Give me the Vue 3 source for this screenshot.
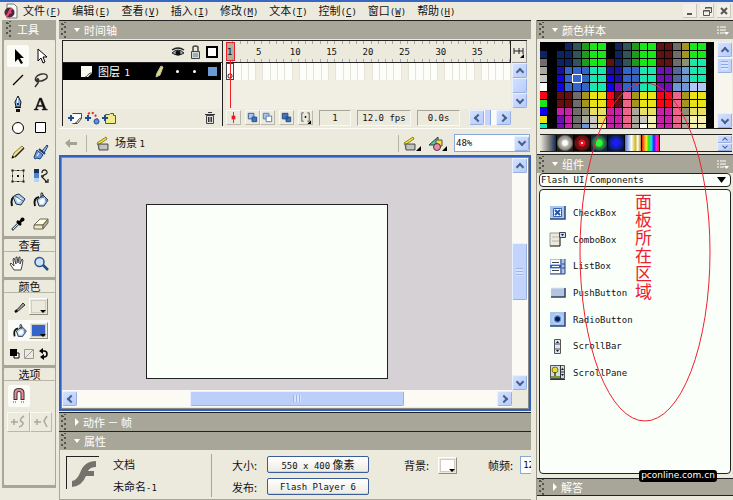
<script setup>
import { ref } from 'vue'

const menus = [
  ['文件', 'F'], ['编辑', 'E'], ['查看', 'V'], ['插入', 'I'], ['修改', 'M'],
  ['文本', 'T'], ['控制', 'C'], ['窗口', 'W'], ['帮助', 'H'],
]

const tools = [
  { name: '箭头', art: '<path d="M8 4v13l3-3 3 5 2-1-3-5h4z" fill="#000"/>' },
  { name: '部分选取', art: '<path d="M8 4v12l3-3 2 5 2-1-2-5h4z" fill="#fff" stroke="#000"/>' },
  { name: '线条', art: '<path d="M6 16L16 6" stroke="#000" stroke-width="1.2"/>' },
  { name: '套索', art: '<path d="M9 13C2 12 6 6 12 5c6-1 7 4 2 6-4 2-8 1-7-1 1-1 3 1 1 4l-3 4" fill="none" stroke="#333" stroke-width="1.4"/>' },
  { name: '钢笔', art: '<path d="M11 3L8 9l1 5h4l1-5z" fill="#8db3e8" stroke="#111"/><path d="M10.500 5v5" stroke="#fff"/><circle cx="11" cy="11" r="1" fill="#111"/><path d="M8 14h6v1H8zM9 16h4v3H9z" fill="#111"/>' },
  { name: '文本', art: '<path d="M9.500 5h2l4.500 11 1.500.5V17h-5.500v-.7l1.500-.3-.9-2.500H7.500L6.700 16l1.500.3v.7H4v-.7l1.300-.3zM8 12.300h4.200L10.200 7z" fill="#111" stroke="#111" stroke-width=".4"/>' },
  { name: '椭圆', art: '<circle cx="11" cy="11" r="5.500" fill="#fff" stroke="#000"/>' },
  { name: '矩形', art: '<path d="M5.500 5.500h10v10h-10z" fill="#fff" stroke="#000"/>' },
  { name: '铅笔', art: '<path d="M5 17l2-5 8-7 2 2-8 8z" fill="#f0e48c" stroke="#8a7c38"/><path d="M8 16l9-9" stroke="#222" stroke-width="1.400"/><path d="M4.500 17.500l1-3 2 2z" fill="#000"/>' },
  { name: '刷子', art: '<path d="M17 4l-5 6 2 2 4-7z" fill="#9cc0f0" stroke="#1c3b70"/><path d="M7 9l6 5-3 4-3-1-2 1-1-2z" fill="#6d9be0" stroke="#1c3b70"/><path d="M9 8l6 5" stroke="#1c3b70" stroke-width="2"/><path d="M7 15l2-3" stroke="#fff"/>' },
  { name: '任意变形', art: '<path d="M5.500 5.500h11v11h-11z" fill="none" stroke="#222" stroke-dasharray="1 1"/><path d="M5 5h1v1H5zM4.500 4.500h2v2h-2zM10 5h2v1h-2zM15.500 4.500h2v2h-2zM5 10h1v2H5zM16 10h1v2h-1zM4.500 15.500h2v2h-2zM10 16h2v1h-2zM15.500 15.500h2v2h-2zM10 10h2v2h-2z" fill="#111"/>' },
  { name: '填充变形', art: '<path d="M4 4h5v4H4z" fill="#17325e"/><path d="M4 8h5v5H4z" fill="#4d84cf"/><path d="M4 13h5v4H4z" fill="#b4d2f4"/><path d="M12 8c0-5 6-3 5 0-1 2-5 2-5 4l5 5M11 11h3M15 17h3v-3" fill="none" stroke="#222" stroke-width="1.300"/>' },
  { name: '墨水瓶', art: '<path d="M5 17q-2-9 4-10" fill="none" stroke="#111" stroke-width="2"/><path d="M6 8q3-3 6-3l6 5-4 6-5-1z" fill="#a9cdef" stroke="#223048"/><path d="M9 9l5 0 1 2-4 3z" fill="#fff"/><path d="M8 7l8 5" stroke="#40669c"/>' },
  { name: '颜料桶', art: '<path d="M5 17q-2-8 4-9" fill="none" stroke="#111" stroke-width="2"/><path d="M7 11l6-5 5 5-4 6H9z" fill="#b9d4ee" stroke="#223048"/><path d="M9 12l4-3 2 3-2 3h-3z" fill="#fff"/><path d="M11 9V4q2-1 2 2v3" fill="none" stroke="#223048"/><path d="M15 9l3 3-2 3z" fill="#5580bc"/>' },
  { name: '滴管', art: '<path d="M5 17l7-7" stroke="#456" stroke-width="2.500"/><path d="M6 16l6-6" stroke="#dfe9f4"/><path d="M10 8l4 4M12 10l4-4" stroke="#000" stroke-width="2.500"/><circle cx="15.500" cy="6.500" r="2" fill="#000"/>' },
  { name: '橡皮擦', art: '<path d="M4 12l6-6h8l-5 6z" fill="#fffde0" stroke="#666"/><path d="M4 12h9v4H4z" fill="#f1e9ad" stroke="#666"/><path d="M13 12l5-6v4l-5 6z" fill="#b5ab7c" stroke="#666"/>' },
]

const bucket = tools[13].art
const handArt = '<path d="M7 17l-4-6 1-1 3 3-1-7 1-1 2 6V4h1l1 6 1-6h1v7l2-5 1 1-1 6-1 4z" fill="#fff" stroke="#333" stroke-width=".9"/>'
const lensArt = '<circle cx="9.500" cy="9" r="4.500" fill="#cfe2f8" stroke="#2c5394" stroke-width="1.500"/><path d="M13 12l5 5" stroke="#234a86" stroke-width="2.500"/>'

const clapper = '<path d="M2 8l9-6 1 2-9 6z" fill="#f0e440" stroke="#8a8424"/><path d="M3 9h10v6H4z" fill="#a4a7a4" stroke="#555"/><path d="M5 11h7M5 13h7" stroke="#dfe2df"/>'

const frames = Array.from({ length: 39 }, (_, i) => i + 1)

const palette = {
  k: '#000', n: '#0c2464', s: '#305458', g: '#1c9c18', l: '#18e818', m: '#641010',
  r: '#f80414', y: '#e8e418', o: '#a49420', a: '#706c6c', b: '#aaa89c', c: '#cac8c4',
  w: '#fbfff8', d: '#1c10a0', u: '#1000ec', e: '#3464c8', t: '#18e8b0', p: '#7010b4',
  i: '#6c98d4', q: '#b0c8f8', z: '#ea648c', x: '#c820a8', v: '#e8e064', f: '#f4f0b0', h: '#8c9070', j: '#50689c',
}
const swatches = [
  'kkknsgllknsgllmmaollk',
  'nknnsgllknsgllmmaollk',
  'aknnsgllmnsgllmmahttk',
  'bkdeeettddeettppjittk',
  'ckueeettudeettppjittk',
  'wkueeettupeettppiiqqk',
  'rkmmaoyyrmzoyyrrzoyyk',
  'lkmmaoyyrmzoyyrrzoyyk',
  'ukxxahvvxxzbvvxxzhvvk',
  'ykpxabcvxxzbcfxxzbffk',
  'tkpxaicfxxzbwfxxzbffk',
].join('').split('')

const components = [
  { name: 'CheckBox', art: '<path d="M1 2h15v13H1z" fill="#a9c4ee"/><path d="M1 15h15V2" fill="none" stroke="#2d4478" stroke-width="1.500"/><path d="M4.500 4.500h8v8h-8z" fill="#fff" stroke="#3465b4"/><path d="M6 6l5 5M11 6l-5 5" stroke="#2454a8" stroke-width="2"/>' },
  { name: 'ComboBox', art: '<path d="M1 2h10v13H1z" fill="#eceadf" stroke="#9a988c"/><path d="M3 6h8M3 10h8" stroke="#b5b3a8"/><path d="M10.500 1.500h6v5h-6z" fill="#c9dbf7" stroke="#445"/><path d="M12 3h3l-1.500 2z" fill="#111"/><path d="M11 7v8H1" fill="none" stroke="#333"/>' },
  { name: 'ListBox', art: '<path d="M1 1h15v15H1z" fill="#a9c4ee"/><path d="M2 2h9v4H2zM2 11h9v4H2z" fill="#fff"/><path d="M3 4.500h7M3 12.500h7" stroke="#444"/><path d="M1 7h11v3H1z" fill="#2f66c0"/><path d="M3 8.500h7" stroke="#fff"/><path d="M12 1v15M13 6h3M13 10h3M1 16h15V1" fill="none" stroke="#2d4478"/>' },
  { name: 'PushButton', art: '<rect x="2" y="4" width="14" height="9" rx="1" fill="#b3c4e2"/><path d="M2 4h14" stroke="#dce7f8"/><path d="M2 13h14V4" fill="none" stroke="#34405c" stroke-width="1.500"/>' },
  { name: 'RadioButton', art: '<path d="M1 1h15v14H1z" fill="#a9c4ee"/><path d="M1 15h15V1" fill="none" stroke="#2d4478" stroke-width="1.500"/><circle cx="8.500" cy="8" r="4.500" fill="#5d92de" stroke="#dfe9fa"/><circle cx="8.500" cy="8" r="2.500" fill="#0a1c48"/>' },
  { name: 'ScrollBar', art: '<path d="M5.500 1.500h6v14h-6z" fill="#dbe6f8" stroke="#555"/><path d="M6 6h6M6 11h6" stroke="#555"/><path d="M7 5h3L8.500 3zM7 12h3l-1.500 2z" fill="#111"/>' },
  { name: 'ScrollPane', art: '<path d="M1.500 1.500h14v13h-14z" fill="#cddcf4" stroke="#555"/><circle cx="6" cy="6" r="3" fill="#e6dc30" stroke="#7b7a18"/><path d="M6 8v5" stroke="#36501c" stroke-width="1.500"/><path d="M2 12h9v2H2z" fill="#7c9c30"/><path d="M11.500 1v14M12 8h4M1 15.500h15" stroke="#333"/><path d="M12 6h3l-1.500-2zM12 10h3l-1.500 2z" fill="#111"/>' },
]

const zoom = ref('48%')
const library = ref('Flash UI Components')
const rate = ref('12')
</script>

<template>
  <div class="app">
    <header class="menubar">
      <svg class="logo" viewBox="0 0 14 16" aria-hidden="true">
        <path d="M3 1h7l3 3v11H3z" fill="#f8f8f4" stroke="#777" />
        <circle cx="5.500" cy="9.500" r="5" fill="#4c2444" />
        <path d="M8 5.500c-3 1-3 7-6 8M4 9.500h3.500" stroke="#f04868" fill="none" stroke-width="2" />
      </svg>
      <nav class="menus">
        <button v-for="[label, key] in menus" :key="key" class="menu">{{ label }}<span class="lat">(<u>{{ key }}</u>)</span></button>
      </nav>
      <div class="winbtns">
        <button aria-label="最小化"><svg viewBox="0 0 12 12"><path d="M3 9h5" stroke="#555" stroke-width="2" /></svg></button>
        <button aria-label="还原"><svg viewBox="0 0 12 12"><path d="M4.500 4V2.500h6v5H9M4 3h7M2.500 5.500h6v5h-6zM2 6h7" fill="none" stroke="#555" /></svg></button>
        <button aria-label="关闭"><svg viewBox="0 0 12 12"><path d="M3 3l6 6M9 3l-6 6" stroke="#555" stroke-width="2" /></svg></button>
      </div>
    </header>

    <div class="body">
      <aside class="tools">
        <h2 class="tools-title"><i class="grip"></i>工具</h2>
        <div class="tool-box tool-grid">
          <button v-for="(t, i) in tools" :key="t.name" class="tool" :class="{ on: i === 0 }" :aria-label="t.name">
            <svg viewBox="0 0 22 22" v-html="t.art"></svg>
          </button>
        </div>
        <section class="tool-box">
          <h3>查看</h3>
          <div class="view-row">
            <button class="tool" aria-label="手形"><svg viewBox="0 0 22 22" v-html="handArt"></svg></button>
            <button class="tool" aria-label="缩放"><svg viewBox="0 0 22 22" v-html="lensArt"></svg></button>
          </div>
        </section>
        <section class="tool-box colors">
          <h3>颜色</h3>
          <div class="color-row">
            <svg viewBox="0 0 18 18"><path d="M4 14l8-9 2 2-8 7z" fill="#9aa49c" stroke="#333" /><path d="M4 14l2-2" stroke="#000" stroke-width="2" /></svg>
            <button class="well" aria-label="笔触颜色"><i class="chip"></i></button>
          </div>
          <div class="color-row on">
            <svg viewBox="1 1 20 20" v-html="bucket"></svg>
            <button class="well" aria-label="填充颜色"><i class="chip fill"></i></button>
          </div>
          <div class="mini-row">
            <button aria-label="黑白"><svg viewBox="0 0 12 12"><path d="M5 5h5v5H5z" fill="#fff" stroke="#000" /><path d="M1 1h7v7H1z" /></svg></button>
            <button aria-label="没有颜色"><svg viewBox="0 0 12 12"><path d="M1.500 1.500h9v9h-9zM2 10l8-8" fill="none" stroke="#999" /></svg></button>
            <button aria-label="交换颜色"><svg viewBox="0 0 12 12"><path d="M3 3h3q3 0 3 3t-3 3H4" fill="none" stroke="#000" stroke-width="1.500" /><path d="M1 3l4-3v6zM2 9l4-3v6z" /></svg></button>
          </div>
        </section>
        <section class="tool-box options">
          <h3>选项</h3>
          <button class="tool on" aria-label="对齐对象"><svg viewBox="0 0 22 22"><path d="M7.500 15V8q0-3 3.500-3t3.500 3v7" fill="none" stroke="#333" stroke-width="4" /><path d="M7.500 14V8q0-3 3.500-3t3.500 3v6" fill="none" stroke="#e88c94" stroke-width="2" /><path d="M5 17h4M13 17h4" stroke="#8aa4cc" stroke-width="2" stroke-dasharray="1 1" /></svg></button>
          <div class="pair">
            <button aria-label="平滑"><svg viewBox="0 0 20 18"><path d="M3 9h7M6 6v6M16 3c-5 3-4 5-2 6s1 4-3 5" fill="none" stroke="#aaa89c" stroke-width="1.500" /></svg></button>
            <button aria-label="伸直"><svg viewBox="0 0 20 18"><path d="M3 9h7M6 6v6M16 3l-3 5 3 6" fill="none" stroke="#aaa89c" stroke-width="1.500" /></svg></button>
          </div>
        </section>
      </aside>

      <main class="center">
        <h2 class="bar"><i class="grip"></i><i class="tri down"></i>时间轴</h2>
        <section class="timeline">
          <div class="layers">
            <div class="layer-head">
              <svg viewBox="0 0 16 14"><path d="M2 8q6-6 12 0-6 4-12 0z" fill="#9bb" stroke="#222" /><circle cx="8" cy="8" r="2.500" fill="#111" /><path d="M2 5q6-4 12 0" fill="none" stroke="#222" stroke-width="1.500" /></svg>
              <svg viewBox="0 0 16 14"><path d="M6 7V2.500q0-1.500 2.500-1.500T11 2.500V7" fill="none" stroke="#444" stroke-width="1.500" /><path d="M4.500 6.500h8v7h-8z" fill="#d9d8cc" stroke="#444" /><path d="M6 9h5M6 11h5" stroke="#5a80c0" /></svg>
              <svg viewBox="0 0 16 14"><path d="M3 2h10v10H3z" fill="#fff" stroke="#000" stroke-width="2" /></svg>
            </div>
            <div class="layer">
              <svg class="page" viewBox="0 0 13 13"><path d="M1 1h11v7l-4 4H1z" fill="#fafaf0" /><path d="M5 12c3 0 2-4 7-4" fill="#bbb" stroke="#444" /></svg>
              <span class="layer-name">图层 <span class="lat">1</span></span>
              <svg class="page" viewBox="0 0 13 13"><path d="M3 12l1-4 4-7 2 1-3 8z" fill="#e4dc68" stroke="#bbb" /></svg>
              <i class="dot"></i><i class="dot"></i><i class="outline"></i>
            </div>
            <div class="layer-foot">
              <svg viewBox="0 0 16 14"><path d="M5.500 2.500h9v5l-4 5h-5" fill="#fff" stroke="#444" /><path d="M8 12c3 0 2-4 6-5" fill="#bbb" stroke="#444" /><path d="M1 7h6M4 4v6" stroke="#1c4c98" stroke-width="2" /></svg>
              <svg viewBox="0 0 16 14"><path d="M4 3q6-4 9 5" fill="none" stroke="#f02020" stroke-width="2" stroke-dasharray="2 2" /><path d="M1 7h6M4 4v6" stroke="#1c4c98" stroke-width="2" /><circle cx="12.500" cy="10.500" r="2.500" fill="#5c90e0" stroke="#1c4c98" /></svg>
              <svg viewBox="0 0 16 14"><path d="M4.500 3.500h4l1-1h3v2h2v8h-10z" fill="#f0ec8c" stroke="#555" /><path d="M1 7h6M4 4v6" stroke="#1c4c98" stroke-width="2" /></svg>
              <svg class="trash" viewBox="0 0 16 14"><path d="M4.500 4.500h7v8h-7z" fill="#ddd" stroke="#444" /><path d="M3 3.500h10M6 1.500h4M6.500 6v5M8 6v5M9.500 6v5" stroke="#333" /></svg>
            </div>
          </div>
          <div class="frames">
            <div class="ruler">
              <span v-for="f in frames" :key="f" class="tick lat"><b v-if="f === 1 || f % 5 === 0">{{ f }}</b></span>
            </div>
            <div class="strip">
              <span v-for="f in frames" :key="f" class="cell" :class="{ key: f === 1, fifth: f % 5 === 0 }"></span>
            </div>
            <i class="playhead"></i>
            <div class="status lat">
              <button class="sb" aria-label="滚动到播放头"><svg viewBox="0 0 14 14"><path d="M7 1v12" stroke="#f01820" /><path d="M5 5h4v4H5z" fill="#f01820" /></svg></button>
              <button class="sb gap" aria-label="绘图纸外观"><svg viewBox="0 0 14 14"><path d="M2.500 2.500h6v6h-6z" fill="#a9c6f0" stroke="#335a98" /><path d="M6.500 6.500h5v5h-5z" fill="#4074c0" stroke="#244880" /></svg></button>
              <button class="sb" aria-label="绘图纸外观轮廓"><svg viewBox="0 0 14 14"><path d="M2.500 2.500h6v6h-6z" fill="#a9c6f0" stroke="#5578a8" /><path d="M5.500 5.500h6v6h-6z" fill="#fff" stroke="#5578a8" /></svg></button>
              <button class="sb gap" aria-label="编辑多个帧"><svg viewBox="0 0 14 14"><path d="M2.500 2.500h6v6h-6zM6.500 6.500h5v5h-5z" fill="#4074c0" stroke="#244880" /></svg></button>
              <button class="sb gap" aria-label="修改绘图纸标记"><svg viewBox="0 0 14 14"><path d="M5 2H3v9h2M9 2h2v9H9" fill="none" stroke="#555" /><circle cx="7" cy="6.500" r="1" /><path d="M13 10v4H9z" /></svg></button>
              <span class="field f1">1</span><span class="field f2">12.0 fps</span><span class="field f3">0.0s</span>
              <span class="hmini"><button class="xp" aria-label="向左"><i class="chev lt"></i></button><i class="nub"></i><button class="xp" aria-label="向右"><i class="chev rt"></i></button></span>
            </div>
          </div>
          <div class="tl-scroll">
            <button class="center-frame" aria-label="帧视图"><svg viewBox="0 0 14 14"><path d="M2 3v6M7 3v6M11 3v6M2 6h9" stroke="#222" /><path d="M12 9v4H8z" /></svg></button>
            <button class="xp" aria-label="向上"><i class="chev up"></i></button><i class="xp"></i><button class="xp" aria-label="向下"><i class="chev dn"></i></button>
          </div>
        </section>

        <section class="editbar">
          <svg class="back" viewBox="0 0 14 12"><path d="M1 6l5-4v3h7v3H6v3z" fill="#a4a296" /></svg>
          <i class="vsep"></i>
          <svg class="clap" viewBox="0 0 16 17" v-html="clapper"></svg>
          <span>场景 <span class="lat">1</span></span>
          <i class="vsep far"></i>
          <button class="pick" aria-label="编辑场景"><svg viewBox="0 0 20 17"><g v-html="clapper"></g><path d="M19 11v5h-5z" /></svg></button>
          <button class="pick" aria-label="编辑元件"><svg viewBox="0 0 20 17"><path d="M1 10l9-8v8z" fill="#48d0a8" stroke="#245" /><path d="M8 5h6v6H8z" fill="#f0e040" stroke="#554" /><circle cx="9" cy="12" r="3.500" fill="#e88cb0" stroke="#533" /><path d="M19 11v5h-5z" /></svg></button>
          <label class="zoom"><select v-model="zoom" aria-label="缩放比例"><option>48%</option><option>100%</option></select><i class="xp"><i class="chev dn"></i></i></label>
        </section>

        <section class="stage">
          <div class="canvas"><div class="paper"></div></div>
          <div class="vbar"><button class="xp" aria-label="向上"><i class="chev up"></i></button><i class="xp grab"></i><button class="xp" aria-label="向下"><i class="chev dn"></i></button></div>
          <div class="hbar"><button class="xp" aria-label="向左"><i class="chev lt"></i></button><i class="xp grab"></i><button class="xp" aria-label="向右"><i class="chev rt"></i></button></div>
          <i class="corner"></i>
        </section>

        <h2 class="bar actions"><i class="grip"></i><i class="tri side"></i>动作 － 帧</h2>
        <h2 class="bar"><i class="grip"></i><i class="tri down"></i>属性</h2>
        <section class="properties">
          <div class="doc-icon"><svg viewBox="0 0 32 32"><path d="M29 4v6q-6 0-8 4h6v5h-8q-4 10-14 11v-6q5-1 8-8 4-12 16-12z" fill="#74726c" /></svg></div>
          <div class="doc"><span>文档</span><span>未命名<span class="lat">-1</span></span></div>
          <i class="rule"></i>
          <div class="rows">
            <span>大小:</span><button class="push"><span class="lat">550 x 400</span> 像素</button>
            <span>发布:</span><button class="push lat">Flash Player 6</button>
          </div>
          <div class="bg">背景: <button class="well" aria-label="背景颜色"><i class="chip paperchip"></i></button></div>
          <label class="rate">帧频: <input v-model="rate" class="lat" /></label>
        </section>
      </main>

      <aside class="right">
        <h2 class="bar"><i class="grip"></i><i class="tri down"></i>颜色样本<svg class="opts" viewBox="0 0 12 10"><path d="M0 2h2M0 5h2M0 8h2M3 2h6M3 5h6M3 8h4" stroke="#fff" /><path d="M7 7h5L9.500 10z" fill="#fff" /></svg></h2>
        <section class="swatch-panel">
          <div class="swatch-wrap">
            <div class="swatches"><i v-for="(s, i) in swatches" :key="i" :class="{ sel: i === 88 }" :style="{ background: palette[s] }"></i></div>
            <div class="sw-scroll"><button class="xp" aria-label="向上"><i class="chev up"></i></button><i class="xp lines"></i><button class="xp last" aria-label="向下"><i class="chev dn"></i></button></div>
          </div>
          <div class="grads">
            <i class="g1"></i><i class="g2"></i><i class="g3"></i><i class="g4"></i><i class="g5"></i><i class="g6"></i><i class="g7"></i>
            <div class="g-scroll"><button class="xp" aria-label="向上"><i class="chev up"></i></button><button class="xp" aria-label="向下"><i class="chev dn"></i></button></div>
          </div>
        </section>
        <h2 class="bar"><i class="grip"></i><i class="tri down"></i>组件<svg class="opts" viewBox="0 0 12 10"><path d="M0 2h2M0 5h2M0 8h2M3 2h6M3 5h6M3 8h4" stroke="#fff" /><path d="M7 7h5L9.500 10z" fill="#fff" /></svg></h2>
        <label class="library"><select v-model="library" class="lat" aria-label="组件库"><option>Flash UI Components</option></select><svg viewBox="0 0 9 6"><path d="M0 0h9L4.500 6z" /></svg></label>
        <ul class="components lat">
          <li v-for="c in components" :key="c.name"><svg viewBox="0 0 17 17" v-html="c.art"></svg>{{ c.name }}</li>
        </ul>
        <h2 class="bar answers"><i class="grip"></i><i class="tri side"></i>解答</h2>
        <svg class="ring" viewBox="0 0 132 340" aria-hidden="true"><ellipse cx="66" cy="170" rx="65" ry="169" fill="none" stroke="#ee2030" /></svg>
        <p class="note">面板所在区域</p>
        <span class="mark">pconline.com.cn</span>
      </aside>
    </div>
  </div>
</template>

<style>
body { background: #ece9dd; }
</style>

<style scoped>
.app { min-height: 100vh; display: flex; flex-direction: column; overflow: hidden; background: #ece9dd; color: #111; font: 11px/14px "Noto Sans CJK SC", sans-serif; border-top: 2px solid #3868c4; box-sizing: border-box; }
.app *, .app *::before, .app *::after { box-sizing: border-box; }
.lat { font-family: "DejaVu Sans Mono", "Noto Sans CJK SC", monospace; font-size: 9px; }
button { padding: 0; margin: 0; border: 0; background: none; color: inherit; font: inherit; }
button.lat { font-family: "DejaVu Sans Mono", monospace; font-size: 9px; }
svg { display: block; flex: none; }
i { font-style: normal; flex: none; }
h2, h3, p, ul { margin: 0; padding: 0; font-weight: 400; font-size: 11px; }

.menubar { display: flex; align-items: center; height: 18px; padding: 0 2px 0 4px; }
.logo { width: 14px; height: 16px; margin-right: 5px; }
.menus { display: flex; gap: 11px; flex: 1; }
.menu { white-space: nowrap; }
.winbtns { display: flex; gap: 3px; }
.winbtns button { width: 14px; height: 14px; display: grid; place-items: center; border-right: 1px solid #c8c5b8; border-bottom: 1px solid #c8c5b8; background: #f2f0e8; }
.winbtns svg { width: 12px; height: 12px; }

.body { flex: 1; display: flex; align-items: stretch; }

.tools { width: 54px; margin: 0 3px 12px 2px; background: #a8a698; padding: 0 1px 3px 2px; display: flex; flex-direction: column; gap: 3px; flex: none; }
.tools-title { display: flex; align-items: center; gap: 5px; height: 17px; padding-left: 2px; color: #fff; }
.grip { width: 6px; height: 16px; background: radial-gradient(circle, #4c4a42 1px, transparent 1px) 0 0 / 4px 5px no-repeat, radial-gradient(circle at 1px 1px, #55534a 1px, transparent 1px) 0 1px / 8px 5px repeat-y, radial-gradient(circle at 4px 4px, #55534a 1px, transparent 1px) 0 1px / 8px 5px repeat-y; }
.tool-box { background: #ece9dd; border-radius: 1px; }
.tool-grid { display: grid; grid-template-columns: 22px 22px; column-gap: 1px; row-gap: 2px; padding: 5px 3px 1px; }
.tool { width: 22px; height: 22px; border-radius: 2px; }
.tool svg { width: 22px; height: 22px; }
.tool.on { background: #fbfbf8; }
h3 { height: 13px; line-height: 12px; text-align: center; border-bottom: 1px solid #b8b5a8; }
.view-row { display: flex; gap: 1px; padding: 1px 3px 2px; }
.colors { display: flex; flex-direction: column; padding-bottom: 5px; }
.color-row { display: flex; align-items: center; justify-content: space-between; height: 21px; margin: 3px 5px 0 4px; padding: 0 2px 0 3px; }
.color-row svg { width: 18px; height: 18px; }
.color-row.on { background: #fbfbf8; }
.well { width: 19px; height: 17px; padding: 1px; border: 1px solid #fff; border-right-color: #8f8c80; border-bottom-color: #8f8c80; background: #ece9dd; position: relative; }
.well::after { content: ""; position: absolute; right: 1px; bottom: 1px; border: 3px solid transparent; border-top: 3px solid #000; border-bottom: 0; }
.chip { display: block; height: 100%; border: 1px solid #d0cdc0; }
.chip.fill { background: #3464c8; }
.chip.paperchip { background: #fff; }
.mini-row { display: flex; justify-content: space-around; padding: 7px 4px 0; }
.mini-row svg { width: 12px; height: 12px; }
.options { flex: 1; }
.options .tool { display: block; margin: 4px 4px 5px; }
.pair { display: flex; padding: 0 3px; }
.pair button { flex: 1; border: 1px solid #f8f8f0; border-right-color: #bbb8aa; border-bottom-color: #bbb8aa; }
.pair svg { width: 20px; height: 18px; }

.center { flex: 1; min-width: 0; display: flex; flex-direction: column; overflow: hidden; }
.bar { display: flex; align-items: center; height: 19px; background: #a8a698; border-top: 1px solid #222; color: #fff; padding-left: 2px; flex: none; }
.tri { margin: 0 4px 0 7px; }
.tri.down { border: 3px solid transparent; border-top: 4px solid #fff; border-bottom: 0; }
.tri.side { border: 4px solid transparent; border-left: 4px solid #fff; border-right: 0; margin-left: 8px; }
.opts { width: 12px; height: 10px; margin-left: auto; margin-right: 4px; }

.timeline { display: flex; margin: 1px 4px 0 3px; height: 86px; border-left: 1px solid #222; border-top: 1px solid #222; flex: none; }
.layers { width: 160px; flex: none; border-right: 1px solid #222; display: flex; flex-direction: column; background: #f1eee3; }
.layer-head { height: 22px; display: flex; align-items: center; justify-content: flex-end; gap: 1px; padding-right: 2px; border-bottom: 1px solid #222; background: #ece9dd; }
.layer-head svg { width: 16px; height: 14px; }
.layer { height: 17px; background: #000; color: #fff; display: flex; align-items: center; margin-right: 1px; padding: 0 4px 0 17px; }
.page { width: 13px; height: 13px; }
.layer-name { flex: 1; padding-left: 5px; }
.layer-name .lat { margin-left: 2px; }
.dot { width: 3px; height: 3px; border-radius: 2px; background: #fff; margin-left: 10px; }
.dot + .dot { margin-left: 14px; }
.outline { width: 9px; height: 9px; background: #6c98d4; margin-left: 12px; }
.layer-foot { margin-top: auto; height: 17px; display: flex; align-items: center; gap: 1px; padding: 0 4px; background: #ece9dd; }
.layer-foot svg { width: 16px; height: 14px; }
.layer-foot .trash { margin-left: auto; }
.frames { flex: 1; min-width: 0; margin-left: 3px; position: relative; display: flex; flex-direction: column; background: #f1eee3; }
.ruler { height: 22px; display: flex; border-bottom: 1px solid #222; border-right: 1px solid #222; background: #ece9dd; flex: none; }
.tick { flex: 1 1 0; min-width: 0; display: flex; justify-content: center; align-items: center; background: linear-gradient(#aaa, #aaa) right top / 1px 3px no-repeat, linear-gradient(#aaa, #aaa) right bottom / 1px 3px no-repeat; }
.tick b { font-weight: 400; flex: none; position: relative; z-index: 1; }
.strip { height: 17px; display: flex; flex: none; }
.cell { flex: 1 1 0; min-width: 0; background: #fdfdf9; border-right: 1px solid #e6e3da; }
.cell.fifth { background: #f1eee2; }
.cell.key { border: 1px solid #444; background: radial-gradient(circle at 3px 12px, #fff 1px, #333 2px, #fff 3px); }
.playhead { position: absolute; left: 0; top: 1px; width: 9px; height: 19px; border: 1px solid #f02028; background: rgba(120, 115, 105, .5); }
.playhead::after { content: ""; position: absolute; left: 3px; top: 18px; width: 1px; height: 47px; background: #f02028; }
.status { margin-top: auto; height: 17px; display: flex; align-items: center; background: #ece9dd; }
.sb { width: 15px; height: 15px; border: 1px solid #fafaf4; border-right-color: #bbb8aa; border-bottom-color: #bbb8aa; flex: none; }
.sb.gap { margin-left: 4px; }
.sb svg { width: 13px; height: 13px; }
.field { height: 16px; line-height: 15px; text-align: center; border: 1px solid #aaa79a; border-right-color: #fafaf4; border-bottom-color: #fafaf4; margin-left: 6px; }
.f1 { width: 32px; }
.f2 { width: 54px; }
.f3 { width: 43px; }
.hmini { display: flex; margin-left: auto; background: #fbfaf4; }
.nub { width: 6px; margin: 0 5px 0 1px; background: #c4d4fc; border-right: 1px solid #8aa4dc; }
.tl-scroll { width: 15px; display: flex; flex-direction: column; margin-left: 1px; }
.center-frame { height: 22px; border-right: 1px solid #999; border-bottom: 1px solid #999; }
.center-frame svg { width: 14px; height: 14px; }

.xp { width: 15px; height: 15px; background: linear-gradient(135deg, #d4e0ff, #b8ccfa); border: 1px solid #e8effe; border-right-color: #98b0e0; border-bottom-color: #98b0e0; border-radius: 2px; display: grid; place-items: center; flex: none; }
.chev { width: 6px; height: 6px; border: solid #46608c; border-width: 2px 0 0 2px; }
.chev.up { transform: translateY(1px) rotate(45deg); }
.chev.dn { transform: translateY(-1px) rotate(225deg); }
.chev.lt { transform: translateX(1px) rotate(-45deg); }
.chev.rt { transform: translateX(-1px) rotate(135deg); }

.editbar { height: 27px; margin-top: 2px; border-top: 1px solid #fdfdf8; display: flex; align-items: center; padding: 2px 1px 0 5px; flex: none; }
.back { width: 14px; height: 12px; }
.vsep { width: 1px; height: 17px; background: #b5b2a6; margin: 0 8px; }
.vsep.far { margin: 0 3px 0 auto; }
.clap { width: 16px; height: 17px; margin-right: 4px; }
.pick { margin-right: 6px; }
.pick svg { width: 20px; height: 17px; }
.zoom { width: 76px; height: 18px; display: flex; align-items: center; background: #fff; border: 1px solid #88a8d8; }
.zoom select { flex: 1; min-width: 0; appearance: none; border: 0; background: none; padding: 0 1px; font: 9px "DejaVu Sans Mono", monospace; color: #111; }

.stage { display: grid; grid-template-columns: 1fr 16px; grid-template-rows: 1fr 17px; height: 256px; border: 3px solid #3060c0; border-width: 2px 2px 3px; outline: 1px solid #8a8a84; outline-offset: -3px; padding: 1px; flex: none; }
.canvas { background: #d5d1d5; display: flex; padding: 46px 41px 11px 84px; min-width: 0; }
.paper { flex: 1; max-width: 242px; background: #fbfff9; border: 1px solid #222; }
.vbar { display: flex; flex-direction: column; background: #fbfaf4; }
.vbar .grab { height: 57px; margin: 70px 0 auto; background: repeating-linear-gradient(#9cb4e8 0 1px, #d8e4ff 1px 3px) center / 7px 8px no-repeat, #c2d3fc; }
.hbar { display: flex; align-items: center; background: #fbfaf4; }
.hbar .grab { width: 214px; margin: 0 auto 0 113px; background: repeating-linear-gradient(90deg, #9cb4e8 0 1px, #d8e4ff 1px 3px) center / 8px 7px no-repeat, #bccffb; }
.corner { background: #ece9dd; }
.actions { margin-top: 1px; }
.properties { flex: 1; display: flex; align-items: center; padding: 4px 0 2px 6px; border-bottom: 1px solid #a8a698; border-left: 1px solid #a8a698; white-space: nowrap; }
.doc-icon { width: 33px; height: 33px; border-top: 1px solid #222; border-left: 1px solid #222; flex: none; margin-bottom: 6px; }
.doc-icon svg { width: 32px; height: 32px; }
.doc { display: flex; flex-direction: column; gap: 8px; margin-left: 14px; width: 98px; flex: none; }
.rule { width: 1px; align-self: stretch; background: #aaa79a; margin-right: 20px; }
.rows { display: grid; grid-template-columns: 35px 102px; row-gap: 5px; align-items: center; flex: none; }
.push { height: 17px; border: 1px solid #3c5c98; border-radius: 2px; background: linear-gradient(#fff, #ecebe3); box-shadow: inset 0 -1px #c8d4ec; }
.bg, .rate { display: flex; align-items: center; gap: 9px; align-self: flex-start; height: 22px; flex: none; margin-left: 35px; }
.rate { margin-left: 31px; gap: 7px; }
.rate input { width: 34px; height: 18px; border: 1px solid #88a8d8; background: #fff; padding: 0 2px; }

.right { width: 197px; flex: none; margin-left: 5px; border-left: 1px solid #999689; display: flex; flex-direction: column; position: relative; }
.swatch-panel { padding: 3px 1px 2px 3px; display: flex; flex-direction: column; gap: 5px; }
.swatch-wrap { display: flex; height: 87px; border-bottom: 1px solid #222; background: #f7f5ec; justify-content: space-between; }
.swatches { width: 174px; display: grid; grid-template-columns: repeat(21, 1fr); grid-auto-rows: calc((100% - 4px) / 10 - 1px); gap: 1px; overflow: hidden; background: #000; padding-top: 1px; }
.sel { outline: 1px solid #fff; z-index: 1; }
.sw-scroll { display: flex; flex-direction: column; gap: 1px; width: 15px; }
.lines { background: repeating-linear-gradient(#8ca8e4 0 1px, #d8e4ff 1px 3px) center / 7px 9px no-repeat, #c2d3fc; }
.last { margin-top: auto; }
.grads { display: flex; height: 18px; border-top: 1px solid #222; border-bottom: 1px solid #222; background: #ece9dd; }
.grads > i { width: 17px; border-right: 1px solid #000; }
.g1 { background: linear-gradient(90deg, #eceadf, #777 60%, #102858); }
.g2 { background: radial-gradient(circle, #fff 20%, #b4b1a6 35%, #8c897e 60%, #222 75%); }
.g3 { background: radial-gradient(circle, #fff 5%, #f81020 12%, #f81020 25%, #701418 35%, #641010 60%, #100404 75%); }
.g4 { background: radial-gradient(circle, #30f840 25%, #1c9c28 40%, #305458 60%, #102838 75%); }
.g5 { background: radial-gradient(circle, #2018f8 25%, #1020b8 40%, #0c2464 60%, #081040 75%); }
.g6 { background: linear-gradient(90deg, #4878d0, #fff 40%, #d4b820 65%, #fff 80%, #a89010); }
.grads .g7 { width: 18px; background: linear-gradient(90deg, #f02020, #f8f020 25%, #20e820 40%, #20d8f0 55%, #2020f0 70%, #f020f0 85%, #f02020); }
.g-scroll { margin-left: auto; display: flex; flex-direction: column; width: 15px; }
.g-scroll .xp { height: 8px; }
.g-scroll .chev { width: 4px; height: 4px; border-width: 1px 0 0 1px; }
.library { height: 14px; margin: 0 2px 1px; display: flex; align-items: center; border: 1px solid #222; border-radius: 4px; background: #fbfff9; padding-right: 4px; }
.library select { flex: 1; min-width: 0; appearance: none; border: 0; background: none; padding: 0 1px; color: #111; }
.library svg { width: 9px; height: 6px; }
.components { flex: 1; list-style: none; margin: 1px 2px 4px; border: 1px solid #222; border-radius: 4px; background: #fbfff9; padding: 9px 9px 70px; }
.components li { display: flex; align-items: center; gap: 7px; height: 27px; }
.components li:nth-child(3n) { height: 26px; }
.components svg { width: 17px; height: 17px; }
.answers { margin-bottom: 4px; height: 18px; border-bottom: 1px solid #222; }
.ring { position: absolute; left: 42px; top: 62px; width: 132px; height: 340px; pointer-events: none; }
.note { position: absolute; left: 98px; top: 172px; width: 17px; font: 400 17px/18px "Noto Sans CJK SC", sans-serif; color: #ee2030; word-break: break-all; }
.mark { position: absolute; left: 102px; top: 450px; width: 78px; height: 12px; background: #000; color: #fff; border-radius: 3px; font: 9px/11px "DejaVu Sans", sans-serif; text-align: center; }
</style>
